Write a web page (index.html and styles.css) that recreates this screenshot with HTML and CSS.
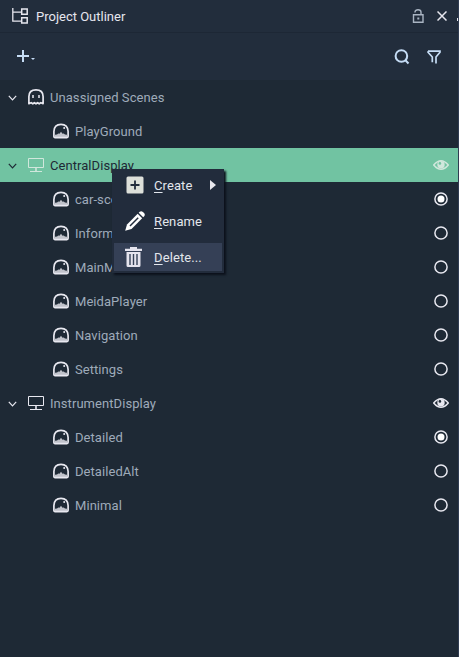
FILE: index.html
```html
<!DOCTYPE html>
<html lang="en">
<head>
<meta charset="utf-8">
<title>Project Outliner</title>
<link rel="stylesheet" href="styles.css">
</head>
<body>
<svg class="defs" aria-hidden="true">
  <symbol id="ghost" viewBox="0 0 16 16"><path d="M.9 14.600V7.500Q1 .9 8 .9t7.100 6.600v7.100l-2.300-.9-1.600 1.100-1.600-1.100L8 14.800l-1.600-1.100-1.600 1.100-1.600-1.100Z" fill="none" stroke="currentColor" stroke-width="1.700" stroke-linejoin="round"/><path d="M5 6v3M11 6v3" stroke="currentColor" stroke-width="1.500"/></symbol>
  <symbol id="scene" viewBox="0 0 16 16"><path d="M.9 13.300V8.500Q1.200 1.300 8 1.300t7.100 7.200v4.800q0 1.300-1.200 1.300H2.100q-1.200 0-1.200-1.300Z" fill="none" stroke="currentColor" stroke-width="1.700"/><path d="M2 14v-2.200l2-.4 1.300-.9 1.200.2L8 8.700l1.500 2 1.200-.2 1.300.9 2 .4V14Z" fill="currentColor" opacity=".8"/><circle cx="11.200" cy="5" r="1" fill="currentColor"/></symbol>
  <symbol id="monitor" viewBox="0 0 16 16"><path d="M.5 1.500h15v9H.5Z" fill="none" stroke="currentColor"/><path d="M7.200 11h1.600v3H7.200ZM2 14h12v1H2Z" fill="currentColor"/></symbol>
  <symbol id="chevron" viewBox="0 0 10 6"><path d="M.8 .8 4.500 4.800 8.200 .8" fill="none" stroke="currentColor" stroke-width="1.200"/></symbol>
  <symbol id="eye" viewBox="0 0 16 12"><path d="M.7 6Q8-2.700 15.300 6 8 14.700.7 6Z" fill="none" stroke="currentColor" stroke-width="1.500"/><circle cx="8" cy="5.700" r="3.700" fill="currentColor"/><circle class="glint" cx="6.900" cy="4.400" r="1.300"/></symbol>
  <symbol id="radio" viewBox="0 0 14 14"><circle cx="7" cy="7" r="6.100" fill="none" stroke="currentColor" stroke-width="1.500"/></symbol>
  <symbol id="radio-on" viewBox="0 0 14 14"><circle cx="7" cy="7" r="6.100" fill="none" stroke="currentColor" stroke-width="1.500"/><circle cx="7" cy="7" r="3.500" fill="#fff"/></symbol>
</svg>
<div class="panel">
  <header class="titlebar">
    <svg class="logo" viewBox="0 0 16 16"><path d="M.8 0v13.200H9M.8 4.200H9" fill="none" stroke="currentColor" stroke-width="1.300"/><path d="M9.700 1h5.500v5.300H9.700ZM9.700 9.700h5.500V15H9.700Z" fill="none" stroke="currentColor" stroke-width="1.500"/></svg>
    <h1>Project Outliner</h1>
    <svg class="lock" viewBox="0 0 12 14"><path d="M1.500 5.800h9.500v7.500H1.500ZM3 3.500V3a3 2.300 0 0 1 6 0v3" fill="none" stroke="currentColor" stroke-width="1.400"/><path d="M5.300 8.500h2v2h-2Z" fill="currentColor"/></svg>
    <svg class="close" viewBox="0 0 10 10"><path d="m.5.500 9 9M9.500.5l-9 9" stroke="currentColor" stroke-width="1.500"/></svg>
    <i class="clipped"></i>
  </header>
  <div class="toolbar">
    <svg class="add" viewBox="0 0 18 12"><path d="M6 0v12M0 6h12" stroke="currentColor" stroke-width="2"/><path d="M14 8h4l-2 2Z" fill="currentColor"/></svg>
    <svg class="search" viewBox="0 0 16 16"><circle cx="7.400" cy="7" r="5.800" fill="none" stroke="currentColor" stroke-width="2"/><path d="m11.200 11 3.300 3.500" stroke="currentColor" stroke-width="2"/></svg>
    <svg class="filter" viewBox="0 0 14 14"><path d="M1 1.200h12v1L9 7v6.500M5.300 12.200V7L1 2.200v-1" fill="none" stroke="currentColor" stroke-width="1.700"/></svg>
  </div>
  <ul class="tree">
    <li class="row group"><svg class="chev"><use href="#chevron"/></svg><svg class="icon"><use href="#ghost"/></svg><span>Unassigned Scenes</span></li>
    <li class="row"><svg class="icon"><use href="#scene"/></svg><span>PlayGround</span></li>
    <li class="row group selected"><svg class="chev"><use href="#chevron"/></svg><svg class="icon"><use href="#monitor"/></svg><span>CentralDisplay</span><svg class="eye"><use href="#eye"/></svg></li>
    <li class="row"><svg class="icon"><use href="#scene"/></svg><span>car-scene</span><svg class="radio"><use href="#radio-on"/></svg></li>
    <li class="row"><svg class="icon"><use href="#scene"/></svg><span>Information</span><svg class="radio"><use href="#radio"/></svg></li>
    <li class="row"><svg class="icon"><use href="#scene"/></svg><span>MainMenu</span><svg class="radio"><use href="#radio"/></svg></li>
    <li class="row"><svg class="icon"><use href="#scene"/></svg><span>MeidaPlayer</span><svg class="radio"><use href="#radio"/></svg></li>
    <li class="row"><svg class="icon"><use href="#scene"/></svg><span>Navigation</span><svg class="radio"><use href="#radio"/></svg></li>
    <li class="row"><svg class="icon"><use href="#scene"/></svg><span>Settings</span><svg class="radio"><use href="#radio"/></svg></li>
    <li class="row group"><svg class="chev"><use href="#chevron"/></svg><svg class="icon"><use href="#monitor"/></svg><span>InstrumentDisplay</span><svg class="eye"><use href="#eye"/></svg></li>
    <li class="row"><svg class="icon"><use href="#scene"/></svg><span>Detailed</span><svg class="radio"><use href="#radio-on"/></svg></li>
    <li class="row"><svg class="icon"><use href="#scene"/></svg><span>DetailedAlt</span><svg class="radio"><use href="#radio"/></svg></li>
    <li class="row"><svg class="icon"><use href="#scene"/></svg><span>Minimal</span><svg class="radio"><use href="#radio"/></svg></li>
  </ul>
  <div class="menu">
    <div class="item"><svg viewBox="0 0 20 20"><rect x="1.500" y="1.500" width="17" height="17" rx="1.500" fill="#dde0da"/><path d="M10 5.500v9M5.500 10h9" stroke="#222c3c" stroke-width="1.800"/></svg><span><u>C</u>reate</span><svg class="sub" viewBox="0 0 6 10"><path d="M0 0 6 5 0 10Z" fill="#e8e8ee"/></svg></div>
    <div class="item"><svg viewBox="0 0 20 20"><path d="M.2 19.800 2 13.500 12.700 2.800l4.500 4.500L6.500 18Z" fill="#fff"/><path d="m13.700 1.800 1-1q1.600-1.300 3.200.2l1.100 1.100q1.500 1.600.2 3.200l-1 1Z" fill="#fff"/><path d="M5 15 13.200 6.800" stroke="#222c3c" stroke-width="1.500"/></svg><span><u>R</u>ename</span></div>
    <div class="item active"><svg viewBox="0 0 20 20"><path d="M0 1.800h17V4H0ZM5 0h7v2H5ZM1.500 5h14v13.500q0 1.500-1.500 1.500H3q-1.500 0-1.500-1.500Z" fill="#e5e4ee"/><path d="M5 7v11M8.500 7v11M12 7v11" stroke="#354056" stroke-width="1.400"/></svg><span><u>D</u>elete...</span></div>
  </div>
</div>
</body>
</html>
```

FILE: styles.css
```css
* { box-sizing: border-box; }

body {
  margin: 0;
  font: 13px/16px Roboto, sans-serif;
  background: #1e2935;
}

svg { display: block; flex: none; }
.defs { position: absolute; width: 0; height: 0; }

.panel {
  position: relative;
  width: 459px;
  height: 657px;
  overflow: hidden;
  border-right: 1px solid #303c52;
}

.titlebar {
  position: relative;
  display: flex;
  align-items: center;
  height: 33px;
  padding: 0 11px 0 12px;
  background: #222d3c;
  border-bottom: 1px solid #1d2735;
  color: #e6e6ee;
}
.titlebar h1 {
  flex: 1;
  margin: 0 0 0 8px;
  padding-top: 2px;
  font-size: 13px;
  font-weight: 400;
}
.logo { width: 16px; height: 16px; }
.lock { width: 12px; height: 14px; margin-right: 13px; color: #a9b4c2; }
.close { width: 10px; height: 10px; }
.clipped {
  position: absolute;
  right: 0;
  top: 18px;
  width: 1px;
  height: 3px;
  background: #e6e6ee;
}

.toolbar {
  display: flex;
  align-items: center;
  height: 47px;
  padding: 0 17px;
  background: #222d3c;
  color: #c5dcf5;
}
.add { width: 18px; height: 12px; margin: -1px auto 0 0; }
.search { width: 16px; height: 16px; margin-right: 17px; }
.filter { width: 14px; height: 14px; }

.tree { margin: 0; padding: 0; list-style: none; }
.row {
  display: flex;
  align-items: center;
  height: 34px;
  padding: 0 10px 0 53px;
  color: #9eabba;
}
.group { padding-left: 8px; }
.row span { flex: 1; margin-left: 6px; padding-top: 2px; letter-spacing: 0.06px; }
.row svg { color: #e8e8f0; }
.row .icon { width: 16px; height: 16px; }
.row .chev { width: 10px; height: 6px; margin: 2px 10px 0 0; }
.row .radio { width: 14px; height: 14px; }
.row .eye { width: 16px; height: 12px; margin-right: -1px; fill: #1e2935; }
.selected { background: #71c3a2; color: #1e2935; }
.selected svg { color: #d0e7dc; }
.selected .chev { color: #1e2935; }
.selected .eye { fill: #71c3a2; }

.menu {
  position: absolute;
  left: 112px;
  top: 169px;
  width: 112px;
  height: 104px;
  padding: 2px;
  background: #222c3c;
  box-shadow: 2px 2px 2px #0b111b;
}
.item {
  display: flex;
  align-items: center;
  height: 28px;
  margin-bottom: 8px;
  padding: 0 6px 0 11px;
  color: #e2e6ec;
  letter-spacing: 0.1px;
}
.item svg { width: 20px; height: 20px; }
.item span { flex: 1; margin-left: 9px; padding-top: 2px; }
.item u { text-underline-offset: 2px; }
.item .sub { width: 6px; height: 10px; }
.active { background: #354056; }
```
